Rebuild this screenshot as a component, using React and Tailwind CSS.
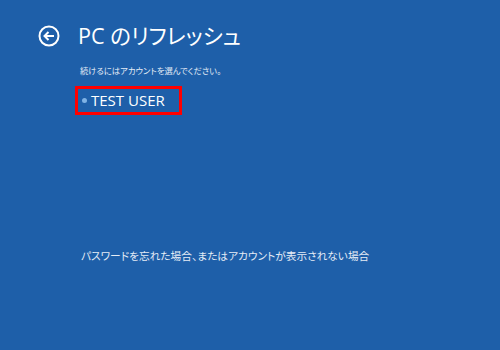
export default function App() {
  const font = "font-['Segoe_UI','Open_Sans','Noto_Sans_CJK_JP',sans-serif] [font-feature-settings:'palt']";
  return (
    <div className={`w-[500px] h-[350px] bg-[#1e5fa9] text-white ${font} flex flex-col`}>
      <div className="flex items-center pl-[38px] pt-[22px] gap-[18px]">
        <svg width="22" height="22" viewBox="0 0 22 22" fill="none" stroke="white" strokeWidth="2">
          <circle cx="11" cy="11" r="9.5" />
          <path d="M16 11H6.5M10.5 7L6.5 11l4 4" />
        </svg>
        <h1 className="text-[21.6px] leading-[28px]">PC のリフレッシュ</h1>
      </div>
      <p className="pl-[80px] mt-[15px] text-[8.3px] leading-[12px] text-[#e4ecf6]">続けるにはアカウントを選んでください。</p>
      <div className="ml-[75px] mt-[9px] w-[107px] h-[29px] border-[3px] border-[#ff0000] flex items-center pl-[4px]">
        <span className="w-[5px] h-[5px] rounded-full bg-[#7fb2e5]" />
        <span className="ml-[4px] text-[15px] leading-none">TEST USER</span>
      </div>
      <p className="pl-[81px] mt-[134px] text-[10.7px] leading-[14px] text-[#e4ecf6]">パスワードを忘れた場合、またはアカウントが表示されない場合</p>
    </div>
  );
}
